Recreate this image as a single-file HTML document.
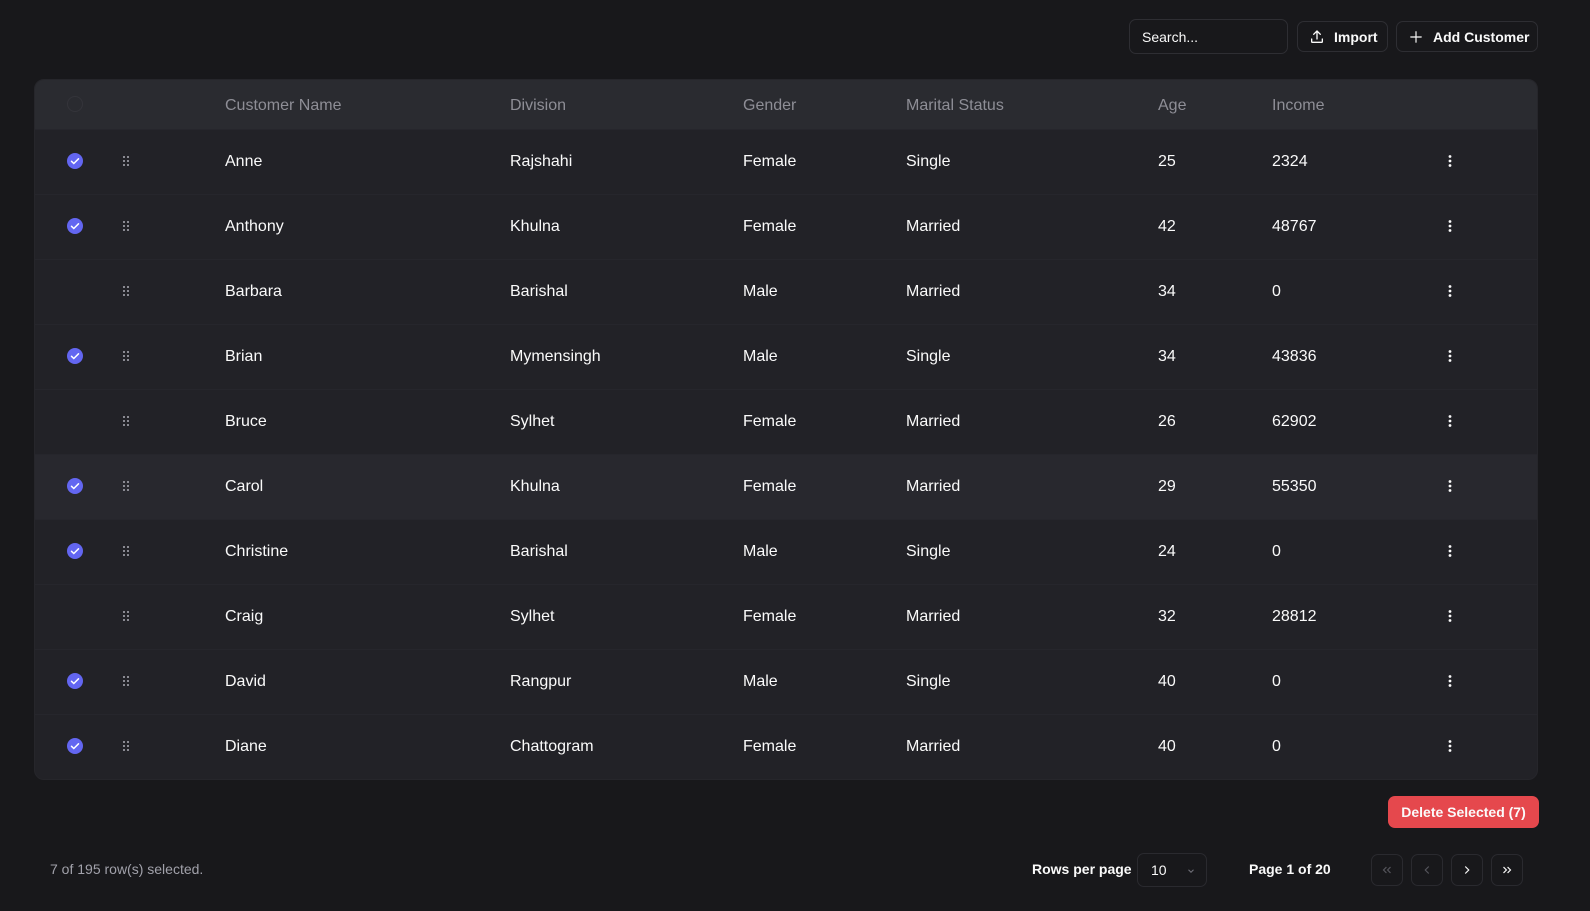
<!DOCTYPE html>
<html><head><meta charset="utf-8"><style>
*{box-sizing:border-box;margin:0;padding:0}
body{width:1590px;height:911px;background:#18181b;font-family:"Liberation Sans",sans-serif;color:#fafafa;position:relative;overflow:hidden}
.abs{position:absolute}
.btn{position:absolute;border:1px solid #2e2e33;border-radius:7px;font-size:14px;font-weight:bold;display:flex;align-items:center;color:#fafafa}
.table{position:absolute;left:34px;top:79px;width:1504px;height:701px;background:#222227;border:1px solid #26262b;border-radius:10px;overflow:hidden}
.hdr{position:absolute;left:0;top:0;width:100%;height:49px;background:#2a2b30}
.row{position:absolute;left:0;width:100%;height:65px;border-top:1px solid #26262c}
.cell{position:absolute;font-size:16px;top:50%;transform:translateY(-50%);white-space:nowrap}
.hdr .cell{color:#8e8e96;margin-top:1px}
.chk{position:absolute;left:32px;top:50%;margin-top:-9px;width:16px;height:16px;border-radius:50%;background:#6366f1}
.grip{position:absolute;left:88px;top:50%;margin-top:-6px}
.dots{position:absolute;left:1413px;top:50%;margin-top:-7px}
.nav{position:absolute;top:854px;width:32px;height:32px;border:1px solid #2a2a2f;border-radius:7px;display:flex;align-items:center;justify-content:center}
.lbl{position:absolute;top:861px;font-size:14px;font-weight:bold}
</style></head><body>
<div class="btn" style="left:1129px;top:19px;width:159px;height:35px;padding-left:12px;font-weight:normal">Search...</div>
<div class="btn" style="left:1297px;top:21px;width:91px;height:31px;padding-left:11px">
<svg width="16" height="16" viewBox="0 0 24 24" fill="none" stroke="#fafafa" stroke-width="2" stroke-linecap="round" stroke-linejoin="round"><path d="M4 15v4a1 1 0 0 0 1 1h14a1 1 0 0 0 1-1v-4M12 15V3M7 8l5-5 5 5"/></svg><span style="margin-left:9px">Import</span></div>
<div class="btn" style="left:1396px;top:21px;width:142px;height:31px;padding-left:12px">
<svg width="14" height="14" viewBox="0 0 24 24" fill="none" stroke="#fafafa" stroke-width="2" stroke-linecap="round"><path d="M12 3v18M3 12h18"/></svg><span style="margin-left:10px">Add Customer</span></div>

<div class="table">
<div class="hdr">
<div style="position:absolute;left:32px;top:16px;width:16px;height:16px;border-radius:50%;border:1px solid #34343a"></div>
<div class="cell" style="left:190px">Customer Name</div>
<div class="cell" style="left:475px">Division</div>
<div class="cell" style="left:708px">Gender</div>
<div class="cell" style="left:871px">Marital Status</div>
<div class="cell" style="left:1123px">Age</div>
<div class="cell" style="left:1237px">Income</div>
</div>
<div id="rows"></div>
</div>

<div class="abs" style="left:1388px;top:796px;width:151px;height:32px;background:#e5484d;border-radius:7px;font-size:14px;font-weight:bold;display:flex;align-items:center;justify-content:center">Delete Selected (7)</div>
<div class="abs" style="left:50px;top:861px;font-size:14px;color:#a1a1aa">7 of 195 row(s) selected.</div>
<div class="lbl" style="left:1032px">Rows per page</div>
<div class="abs" style="left:1137px;top:853px;width:70px;height:34px;border:1px solid #2a2a2f;border-radius:7px;font-size:14px;padding:8px 0 0 13px">10
<svg style="position:absolute;left:48px;top:12px" width="10" height="10" viewBox="0 0 24 24" fill="none" stroke="#71717a" stroke-width="2.5"><path d="M6 9l6 6 6-6"/></svg></div>
<div class="lbl" style="left:1249px">Page 1 of 20</div>
<div class="nav" style="left:1371px"><svg width="14" height="14" viewBox="0 0 24 24" fill="none" stroke="#55555c" stroke-width="2"><path d="M11 17l-5-5 5-5M18 17l-5-5 5-5"/></svg></div>
<div class="nav" style="left:1411px"><svg width="14" height="14" viewBox="0 0 24 24" fill="none" stroke="#55555c" stroke-width="2"><path d="M15 18l-6-6 6-6"/></svg></div>
<div class="nav" style="left:1451px"><svg width="14" height="14" viewBox="0 0 24 24" fill="none" stroke="#fafafa" stroke-width="2"><path d="M9 18l6-6-6-6"/></svg></div>
<div class="nav" style="left:1491px"><svg width="14" height="14" viewBox="0 0 24 24" fill="none" stroke="#fafafa" stroke-width="2"><path d="M13 17l5-5-5-5M6 17l5-5-5-5"/></svg></div>

<script>
const d=[["Anne","Rajshahi","Female","Single","25","2324",1],["Anthony","Khulna","Female","Married","42","48767",1],["Barbara","Barishal","Male","Married","34","0",0],["Brian","Mymensingh","Male","Single","34","43836",1],["Bruce","Sylhet","Female","Married","26","62902",0],["Carol","Khulna","Female","Married","29","55350",1],["Christine","Barishal","Male","Single","24","0",1],["Craig","Sylhet","Female","Married","32","28812",0],["David","Rangpur","Male","Single","40","0",1],["Diane","Chattogram","Female","Married","40","0",1]];
const xs=[190,475,708,871,1123,1237];let h="";
d.forEach((r,i)=>{h+=`<div class="row" style="top:${49+i*65}px;${i==5?'background:#28282e':''}">`;
if(r[6])h+=`<div class="chk"><svg width="16" height="16" viewBox="0 0 16 16" fill="none" stroke="#fff" stroke-width="1.5" stroke-linecap="round"><path d="M4.5 8.3l2.3 2.2 4.7-4.7"/></svg></div>`;
h+=`<svg class="grip" width="6" height="10" viewBox="0 0 6 10" fill="#8a8a92"><rect x="0" y="0" width="2" height="2"/><rect x="4" y="0" width="2" height="2"/><rect x="0" y="4" width="2" height="2"/><rect x="4" y="4" width="2" height="2"/><rect x="0" y="8" width="2" height="2"/><rect x="4" y="8" width="2" height="2"/></svg>`;
for(let k=0;k<6;k++)h+=`<div class="cell" style="left:${xs[k]}px">${r[k]}</div>`;
h+=`<svg class="dots" width="4" height="12" viewBox="0 0 4 12" fill="#fafafa"><circle cx="2" cy="1.5" r="1.4"/><circle cx="2" cy="6" r="1.4"/><circle cx="2" cy="10.5" r="1.4"/></svg></div>`;});
document.getElementById("rows").innerHTML=h;
</script>
</body></html>
